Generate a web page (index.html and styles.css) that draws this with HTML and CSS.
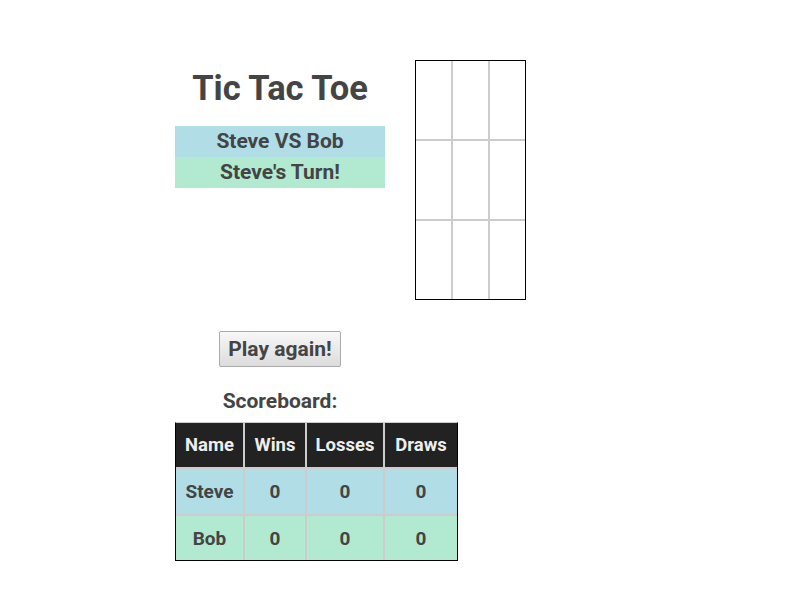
FILE: index.html
```html
<!DOCTYPE html>
<html>
<head>
<meta charset="utf-8">
<link rel="stylesheet" href="styles.css">
</head>
<body>
<div class="page">
  <div class="top">
    <div class="info">
      <h1 class="title">Tic Tac Toe</h1>
      <div class="bar vs">Steve VS Bob</div>
      <div class="bar turn">Steve's Turn!</div>
    </div>
    <div class="board">
      <div class="cell"></div><div class="cell"></div><div class="cell"></div>
      <div class="cell"></div><div class="cell"></div><div class="cell"></div>
      <div class="cell"></div><div class="cell"></div><div class="cell"></div>
    </div>
  </div>
  <div class="controls">
    <button class="again">Play again!</button>
    <div class="label">Scoreboard:</div>
  </div>
  <table class="score">
    <tr class="head"><th class="c-name">Name</th><th class="c-wins">Wins</th><th class="c-loss">Losses</th><th class="c-draw">Draws</th></tr>
    <tr class="p1"><td>Steve</td><td>0</td><td>0</td><td>0</td></tr>
    <tr class="p2"><td>Bob</td><td>0</td><td>0</td><td>0</td></tr>
  </table>
</div>
</body>
</html>
```
FILE: styles.css
```css
html, body { margin: 0; padding: 0; background: #fff; }
body { font-family: Roboto, "Liberation Sans", sans-serif; color: #444; }
.page { padding: 60px 0 0 175px; }
.top { display: flex; align-items: flex-start; }
.info { width: 210px; text-align: center; }
.title { margin: 8px 0 0; font-size: 34.5px; font-weight: 700; height: 58px; line-height: 40px; }
.bar { height: 31px; line-height: 31px; font-size: 21px; font-weight: 700; }
.vs { background: #b0dde6; }
.turn { background: #b2e9d1; }
.board {
  margin-left: 30px;
  display: grid;
  grid-template-columns: repeat(3, 35px);
  grid-template-rows: repeat(3, 78px);
  gap: 2px;
  background: #ccc;
  border: 1px solid #000;
}
.cell { background: #fff; }
.controls { width: 210px; display: flex; flex-direction: column; align-items: center; padding-top: 31px; }
.again {
  width: 122px; height: 36px;
  font-family: inherit; font-size: 21px; font-weight: 700; color: #444;
  border: 1px solid #aaa; border-radius: 2px;
  background: linear-gradient(#f7f7f7, #dcdcdc);
  padding: 0;
}
.label { margin-top: 22px; font-size: 21px; font-weight: 700; line-height: 24px; }
.score {
  margin-top: 9px;
  border-collapse: separate; border-spacing: 0;
  border: 1px solid #000; border-top: 1px solid #ccc;
  font-size: 19px; font-weight: 700; text-align: center;
}
.score th, .score td { padding: 0; border-right: 2px solid #ccc; border-bottom: 2px solid #ccc; }
.score th:last-child, .score td:last-child { border-right: 0; }
.score tr:last-child td { border-bottom: 0; }
.head th { background: #222; color: #eee; height: 44px; font-size: 18.5px; }
.p1 td { background: #b0dde6; height: 45px; }
.p2 td { background: #b2e9d1; height: 44px; }
.c-name { width: 67px; }
.c-wins { width: 60px; }
.c-loss { width: 76px; }
.c-draw { width: 72px; }
```
